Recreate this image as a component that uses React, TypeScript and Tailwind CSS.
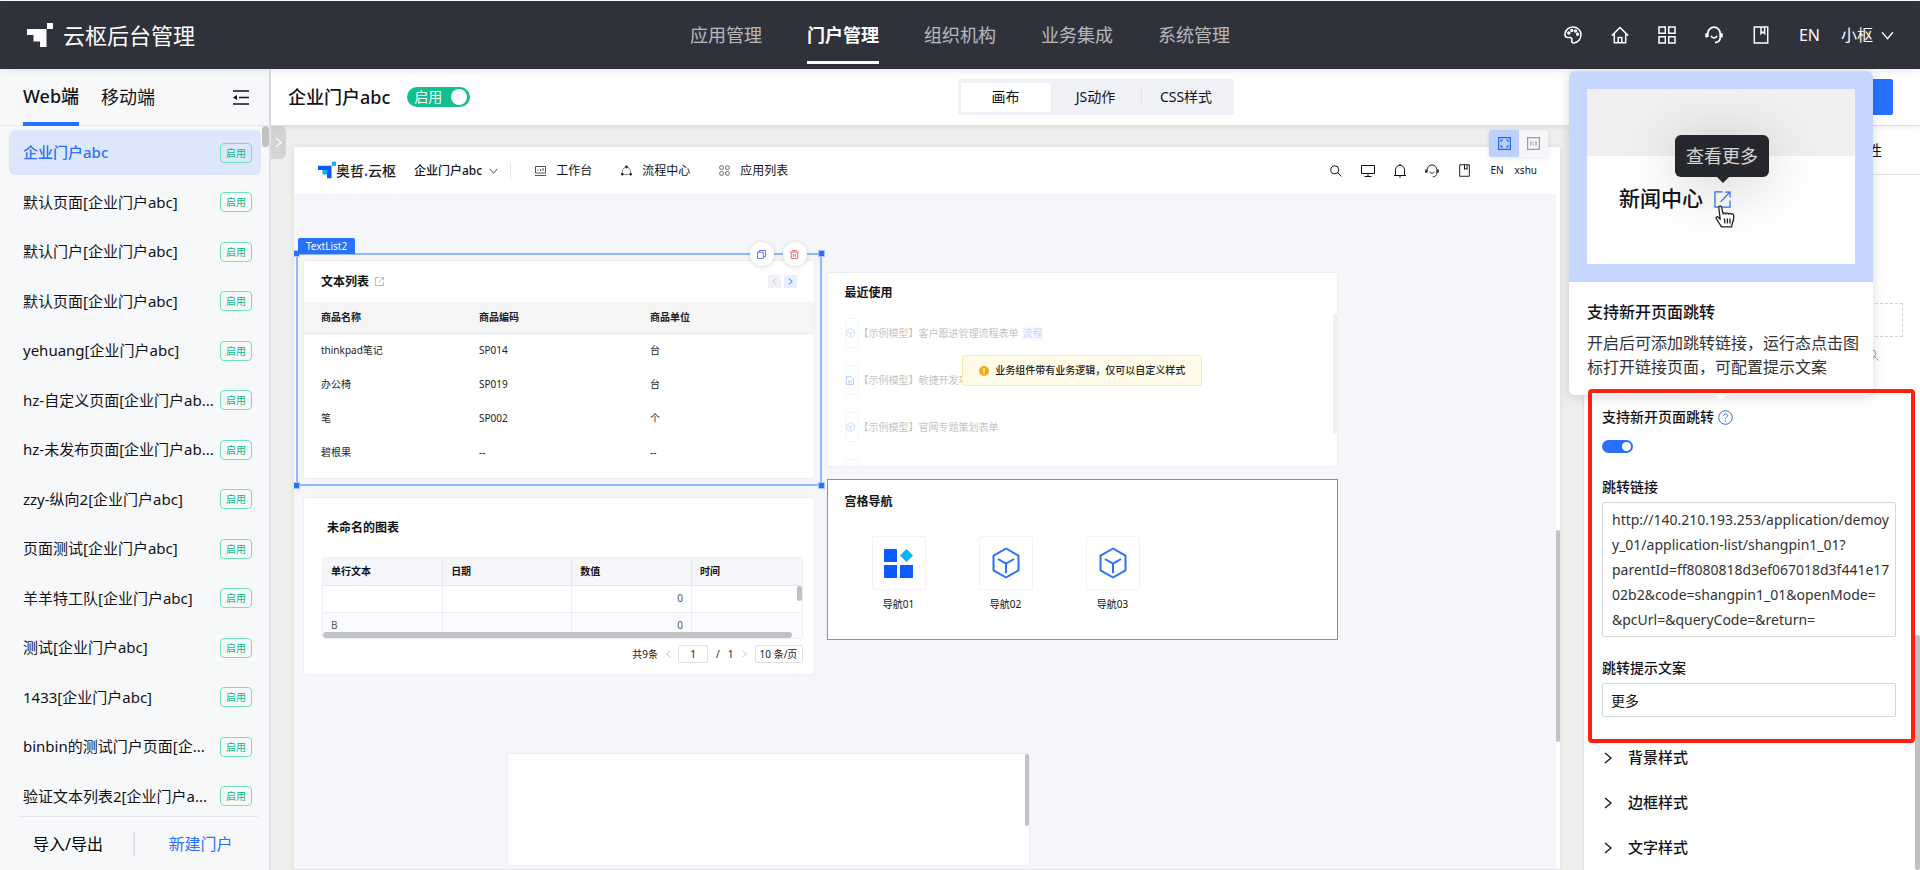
import React, { useState } from 'react';
import clsx from 'clsx';

const navItems = ['应用管理', '门户管理', '组织机构', '业务集成', '系统管理'];

const portals = [
  '企业门户abc',
  '默认页面[企业门户abc]',
  '默认门户[企业门户abc]',
  '默认页面[企业门户abc]',
  'yehuang[企业门户abc]',
  'hz-自定义页面[企业门户ab...',
  'hz-未发布页面[企业门户ab...',
  'zzy-纵向2[企业门户abc]',
  '页面测试[企业门户abc]',
  '羊羊特工队[企业门户abc]',
  '测试[企业门户abc]',
  '1433[企业门户abc]',
  'binbin的测试门户页面[企...',
  '验证文本列表2[企业门户a...',
];

const goods = [
  ['thinkpad笔记', 'SP014', '台'],
  ['办公椅', 'SP019', '台'],
  ['笔', 'SP002', '个'],
  ['碧根果', '--', '--'],
];

const recents = [
  { name: '【示例模型】客户跟进管理流程表单', tag: '流程', icon: 'cube' },
  { name: '【示例模型】敏捷开发项目管理表单', tag: '', icon: 'doc' },
  { name: '【示例模型】官网专题策划表单', tag: '', icon: 'cube' },
  { name: '', tag: '', icon: '' },
];

const jumpUrl = [
  'http://140.210.193.253/application/demoy',
  'y_01/application-list/shangpin1_01?',
  'parentId=ff8080818d3ef067018d3f441e17',
  '02b2&code=shangpin1_01&openMode=',
  '&pcUrl=&queryCode=&return=',
].join('\n');

type IconProps = { className?: string; children?: React.ReactNode; box?: string; width?: number };

function Svg({ className, children, box = '0 0 18 18', width = 1.5 }: IconProps) {
  return (
    <svg viewBox={box} className={clsx('shrink-0', className)} fill="none" stroke="currentColor" strokeWidth={width} aria-hidden="true">
      {children}
    </svg>
  );
}

const PaletteIcon = ({ className }: IconProps) => (
  <Svg className={className}>
    <path d="M1 7.6C1.6 3.9 4.9 1 9 1c4.500 0 8 3.400 8 7.800 0 4.500-3.300 8.200-7.300 8.200-1.500 0-2.200-1-1.900-2.200.4-1.500.1-2.900-1.300-3.300-1.200-.3-2.300.3-3.500-.1C1.500 11 .8 9.500 1 7.600z" />
    <circle cx="4.800" cy="7" r="1" />
    <circle cx="7.800" cy="4.600" r="1" />
    <circle cx="11.500" cy="5" r="1" />
    <circle cx="13.600" cy="8.300" r="1" />
  </Svg>
);

const HomeIcon = ({ className }: IconProps) => (
  <Svg className={className}>
    <path d="M.8 9.600 9 1.500l8.200 8.100M3.300 8v8.700h11.400V8M7.200 16.500v-5h3.600v5" />
  </Svg>
);

const GridIcon = ({ className }: IconProps) => (
  <Svg className={className}>
    <path d="M1 1h6.300v6.300H1zM10.700 1H17v6.300h-6.300zM1 10.700h6.300V17H1zM10.700 10.700H17V17h-6.300z" />
  </Svg>
);

const HeadsetIcon = ({ className, width }: IconProps) => (
  <Svg className={className} width={width}>
    <path d="M2.800 11V7.500C2.800 4 5.500 1.200 9 1.200S15.200 4 15.200 7.500v4.300c0 2.700-2 4.500-5.200 4.800" />
    <path d="M6 9.800c.6 1.500 1.600 2.200 3 2.200s2.400-.7 3-2.200" />
    <path d="M1.300 7.200v4.200M16.700 7.200v4.200" strokeWidth="2" />
  </Svg>
);

const BookIcon = ({ className, width }: IconProps) => (
  <Svg className={className} width={width}>
    <path d="M2.300 1h13.400v16H2.300zM9 1v6.500l1.800-1.600 1.800 1.600V1" />
  </Svg>
);

const ChevronDown = ({ className, width = 1.2 }: IconProps) => (
  <Svg className={className} box="0 0 12 8" width={width}>
    <path d="M1 1l5 6 5-6" />
  </Svg>
);

const ChevronRight = ({ className, width = 1.3 }: IconProps) => (
  <Svg className={className} box="0 0 8 12" width={width}>
    <path d="M1 1l6 5-6 5" />
  </Svg>
);

const ShareIcon = ({ className, width = 1.3 }: IconProps) => (
  <Svg className={className} width={width}>
    <path d="M9 1H1v16h16V10M7 11.500 16 2M12 1.300h5V6.500" />
  </Svg>
);

const CubeIcon = ({ className, width = 2 }: IconProps) => (
  <Svg className={className} box="0 0 28 32" width={width}>
    <path d="M14 1.500 26.500 8.700v14.600L14 30.500 1.500 23.300V8.700zM6 12l8 4.600L22 12M14 16.600V26" strokeLinejoin="round" />
  </Svg>
);

// the corner mark used by both logos
function LogoMark({ className, main, light, accent }: { className: string; main: string; light: string; accent: string }) {
  return (
    <svg viewBox="0 0 26 24" className={clsx('shrink-0', className)} aria-hidden="true">
      <path d="M0 6h19.500v18H13V12H0z" fill={main} />
      <path d="M6.500 12H13v6.500H6.500z" fill={light} />
      <path d="M20 0h6v6h-6z" fill={accent} />
    </svg>
  );
}

function Header() {
  return (
    <header className="relative z-10 mt-px grid h-[68px] shrink-0 grid-cols-[1fr_auto_1fr] items-center bg-[#2f323b] text-white shadow-[0_2px_8px_rgba(0,0,0,0.08)]">
      <a href="#" className="flex items-center gap-[10px] pl-[27px]">
        <LogoMark className="h-6 w-[26px]" main="#fff" light="#fff" accent="#fff" />
        <span className="text-[22px] leading-8">云枢后台管理</span>
      </a>
      <nav className="flex gap-[45px] text-lg">
        {navItems.map((item, i) => (
          <a
            key={item}
            href="#"
            className={clsx('flex h-[58px] items-center border-y-[3px] border-t-transparent', i === 1 ? 'border-b-white font-bold' : 'border-b-transparent text-white/65')}
          >
            {item}
          </a>
        ))}
      </nav>
      <div className="flex items-center justify-end gap-[29px] pr-[26px]">
        <button aria-label="主题"><PaletteIcon className="size-[18px]" /></button>
        <button aria-label="首页"><HomeIcon className="size-[18px]" /></button>
        <button aria-label="应用"><GridIcon className="size-[18px]" /></button>
        <button aria-label="客服"><HeadsetIcon className="size-[18px]" width={1.7} /></button>
        <button aria-label="文档"><BookIcon className="size-[18px]" /></button>
        <button className="text-base">EN</button>
        <button className="-ml-2 flex items-center gap-2 text-base">
          小枢
          <ChevronDown className="h-[9px] w-[13px]" />
        </button>
      </div>
    </header>
  );
}

function Sidebar() {
  const [active, setActive] = useState(0);
  return (
    <aside className="flex w-[271px] shrink-0 flex-col border-r-2 border-[#dfe1e4] bg-[#f7f8fa]">
      <div className="flex h-[57px] shrink-0 items-stretch border-b border-[#e6e8eb] pl-[23px] pr-5 text-lg text-[#111218]">
        <button className="-mb-px border-b-4 border-[#2970ff] font-medium">Web端</button>
        <button className="ml-[22px]">移动端</button>
        <button aria-label="收起菜单" className="ml-auto">
          <Svg className="h-[15px] w-4" box="0 0 16 15" width={1.5}>
            <path d="M0 1h16M6 7.500h10M0 14h16" />
            <path d="M0 7.500l4-2.500v5z" fill="currentColor" stroke="none" />
          </Svg>
        </button>
      </div>
      <div className="relative min-h-0 flex-1 overflow-hidden">
        <ul className="pt-[2px]">
          {portals.map((name, i) => (
            <li key={i} className="flex items-center pl-[9px] pr-2 odd:h-[49px] even:h-[50px]">
              <button
                onClick={() => setActive(i)}
                className={clsx(
                  'flex h-[45px] w-full min-w-0 items-center justify-between rounded-md pl-[14px] pr-[9px]',
                  i === active ? 'bg-[#dce7fb] font-medium text-[#2970ff]' : 'text-[#111218]'
                )}
              >
                <span className="text-[15px] whitespace-nowrap">{name}</span>
                <span className="h-5 w-8 shrink-0 rounded-[4px] border border-[#71e2bd] text-center text-[10px] leading-[18px] font-normal text-[#10b88a]">启用</span>
              </button>
            </li>
          ))}
        </ul>
        <span className="absolute right-0 top-0 h-[21px] w-[7px] rounded-full bg-[#c1c1c1]" />
      </div>
      <div className="ml-[18px] mr-[11px] grid h-[54px] shrink-0 grid-cols-[117px_1fr] items-center border-t border-[#e3e5e8] text-center text-base">
        <button className="h-6 border-r-2 border-[#dfe1e4] pr-[15px]">导入/导出</button>
        <button className="pl-2 text-[#2970ff]">新建门户</button>
      </div>
    </aside>
  );
}

function Toolbar() {
  return (
    <div className="relative z-[5] grid h-[57px] shrink-0 grid-cols-[1fr_auto_1fr] items-center border-b border-[#dfe1e4] bg-white shadow-[0_1px_6px_rgba(0,0,0,0.08)]">
      <div className="flex items-center gap-[17px] pl-[17px]">
        <h1 className="text-lg font-medium text-[#111218]">企业门户abc</h1>
        <label className="flex h-5 w-[63px] items-center justify-between rounded-full bg-[#10c08f] pl-[7px] pr-[3px] text-sm leading-5 text-white">
          启用
          <input type="checkbox" defaultChecked className="size-4 appearance-none rounded-full bg-white" />
        </label>
      </div>
      <div className="flex h-9 items-center rounded-[3px] bg-[#f0f1f6] px-[3px] text-sm text-[#111218]">
        <button className="h-[29px] w-[90px] rounded-[2px] bg-white">画布</button>
        <button className="w-[90px]">JS动作</button>
        <button className="w-[90px] border-l border-[#dfe1e4] leading-[14px]">CSS样式</button>
      </div>
      <button aria-label="保存" className="mr-[27px] h-9 w-[90px] justify-self-end rounded-[2px] bg-[#2970ff]" />
    </div>
  );
}

function CanvasHeader() {
  return (
    <div className="flex h-[47px] shrink-0 items-center bg-white pl-6 pr-[23px] text-xs text-[#111218]">
      <div className="flex items-center">
        <LogoMark className="h-[18px] w-[18px] self-start" main="#0a5cff" light="#00b4ff" accent="#00b4ff" />
        <span className="text-sm font-medium leading-5 text-[#222]">奥哲<span className="font-bold text-[#0a5cff]">.</span>云枢</span>
      </div>
      <button className="ml-[18px] flex items-center gap-[7px] font-medium">
        企业门户abc
        <ChevronDown className="h-[6px] w-[9px]" width={1} />
      </button>
      <span className="ml-3 h-[18px] w-px bg-[#e8e8e8]" />
      <a href="#" className="ml-6 flex items-center gap-[10px]">
        <Svg className="h-[10px] w-[11px] text-[#555]" box="0 0 11 10" width={1}>
          <path d="M.5.5h10v6.500H.5zM0 9.500h11M3 5V4M5.500 5V3M8 5V2" />
        </Svg>
        工作台
      </a>
      <a href="#" className="ml-[29px] flex items-center gap-[10px]">
        <Svg className="size-[11px]" box="0 0 12 12" width={1}>
          <path d="M4.500 2.500C2.500 3.500 1.500 5.500 1.500 8M7.500 2.500c2 1 3 3 3 5.500M3.500 10.500h5" stroke="#777" />
          <path d="M6 .5v3M4.500 2h3M0 10h3M1.500 8.500v3M9 10h3M10.500 8.500v3" strokeWidth="1.500" />
        </Svg>
        流程中心
      </a>
      <a href="#" className="ml-[29px] flex items-center gap-[10px]">
        <Svg className="size-[11px] text-[#666]" box="0 0 12 12" width={1}>
          <rect x=".8" y=".8" width="4" height="4" rx="1.500" />
          <rect x="7.200" y=".8" width="4" height="4" rx="1.500" />
          <rect x=".8" y="7.200" width="4" height="4" rx="1.500" />
          <rect x="7.200" y="7.200" width="4" height="4" rx="1.500" />
        </Svg>
        应用列表
      </a>
      <div className="ml-auto flex items-center gap-[19px] text-[10px]">
        <button aria-label="搜索">
          <Svg className="size-3" box="0 0 12 12" width={1}><circle cx="4.800" cy="4.800" r="4" /><path d="M7.800 7.800 11.500 11.500" /></Svg>
        </button>
        <button aria-label="桌面">
          <Svg className="h-3 w-[14px]" box="0 0 14 12" width={1}><path d="M.5.500h13v8H.5zM7 8.500v3M3.500 11.500h7" /></Svg>
        </button>
        <button aria-label="消息">
          <Svg className="h-[14px] w-3" box="0 0 12 14" width={1}><path d="M0 11.500h12M1.500 11.500V5.800C1.500 3 3.500 1.300 6 1.300S10.500 3 10.500 5.800v5.700M6 0v1.300M6 12v2" /></Svg>
        </button>
        <button aria-label="客服"><HeadsetIcon className="size-[14px]" width={1.2} /></button>
        <button aria-label="文档"><BookIcon className="size-[13px]" width={1.3} /></button>
        <button>EN</button>
        <button className="-ml-2">xshu</button>
      </div>
    </div>
  );
}

const cardClass = 'rounded-[3px] border border-[#eceef3] bg-white';

function TextListCard() {
  return (
    <div className="relative">
      <section className={clsx(cardClass, 'h-[219px]')}>
        <div className="flex h-[41px] items-center pl-[17px] pr-[17px]">
          <h2 className="text-xs font-semibold">文本列表</h2>
          <ShareIcon className="ml-[6px] size-[9px] text-[#aaa]" width={1.6} />
          <button aria-label="上一页" className="ml-auto flex size-[13px] items-center justify-center bg-[#f1f2f5] text-[#bbb]">
            <ChevronRight className="h-[7px] w-[5px] rotate-180" />
          </button>
          <button aria-label="下一页" className="ml-[3px] flex size-[13px] items-center justify-center bg-[#e8f0ff] text-[#2970ff]">
            <ChevronRight className="h-[7px] w-[5px]" width={1.6} />
          </button>
        </div>
        <table className="w-full table-fixed text-left text-[10px] text-[#222]">
          <thead>
            <tr className="h-[31px] border-b border-[#ebebeb] bg-[#f5f5f5]">
              <th className="w-[157px] pl-[17px] font-semibold">商品名称</th>
              <th className="w-[171px] pl-[18px] font-semibold">商品编码</th>
              <th className="pl-[18px] font-semibold">商品单位</th>
            </tr>
          </thead>
          <tbody>
            {goods.map((row) => (
              <tr key={row[0]} className="h-[34px]">
                <td className="pl-[17px]">{row[0]}</td>
                <td className="pl-[18px]">{row[1]}</td>
                <td className="pl-[18px]">{row[2]}</td>
              </tr>
            ))}
          </tbody>
        </table>
      </section>

      {/* selection frame */}
      <div className="pointer-events-none absolute -inset-x-[7px] -inset-y-[7px] border-2 border-[#93b7ff]">
        <span className="absolute -left-[4px] -top-[4px] size-[5px] bg-[#2970ff] ring-1 ring-[#a9c6ff]" />
        <span className="absolute -right-[4px] -top-[4px] size-[5px] bg-[#2970ff] ring-1 ring-[#a9c6ff]" />
        <span className="absolute -bottom-[4px] -left-[4px] size-[5px] bg-[#2970ff] ring-1 ring-[#a9c6ff]" />
        <span className="absolute -bottom-[4px] -right-[4px] size-[5px] bg-[#2970ff] ring-1 ring-[#a9c6ff]" />
        <span className="absolute -top-[17px] left-0 h-4 rounded-t-[2px] bg-[#2970ff] px-2 text-[10px] leading-4 text-white">TextList2</span>
      </div>
      <div className="absolute -top-[18px] right-[8px] flex gap-[9px]">
        <button aria-label="复制" className="flex size-6 items-center justify-center rounded-full bg-white text-[#5b6cff] shadow-[0_1px_5px_rgba(0,0,0,0.15)]">
          <Svg className="size-[9px]" box="0 0 10 10" width={1.1}><path d="M.5 2.500h6.500v7H.5zM2.500 2.500V.5h7v7H7" /></Svg>
        </button>
        <button aria-label="删除" className="flex size-6 items-center justify-center rounded-full bg-white text-[#f56565] shadow-[0_1px_5px_rgba(0,0,0,0.15)]">
          <Svg className="size-[9px]" box="0 0 10 10" width={1.1}><path d="M0 2.200h10M3 2V.5h4V2M1.500 2.500v7h7v-7M4 4.500v3M6 4.500v3" /></Svg>
        </button>
      </div>
    </div>
  );
}

function ChartCard() {
  return (
    <section className={clsx(cardClass, 'mt-[18px] h-[178px] pl-[18px] pr-[11px]')}>
      <h2 className="flex h-[59px] items-center pl-[5px] text-xs font-semibold">未命名的图表</h2>
      <div className="relative h-[82px] overflow-hidden rounded-[3px] border border-[#eceef3]">
        <table className="w-full table-fixed text-left text-[10px]">
          <thead>
            <tr className="h-[27px] bg-[#f4f6fa]">
              <th className="w-[25%] border-r border-b border-[#e6e8ec] pl-2 font-semibold">单行文本</th>
              <th className="w-[27%] border-r border-b border-[#e6e8ec] pl-2 font-semibold">日期</th>
              <th className="w-[25%] border-r border-b border-[#e6e8ec] pl-2 font-semibold">数值</th>
              <th className="border-b border-[#e6e8ec] pl-2 font-semibold">时间</th>
            </tr>
          </thead>
          <tbody className="text-[#555]">
            {['', 'B'].map((text, i) => (
              <tr key={i} className="h-[27px] even:bg-[#fafbff]">
                <td className="border-r border-b border-[#eceef3] pl-2">{text}</td>
                <td className="border-r border-b border-[#eceef3]" />
                <td className="border-r border-b border-[#eceef3] pr-2 text-right">0</td>
                <td className="border-b border-[#eceef3]" />
              </tr>
            ))}
          </tbody>
        </table>
        <span className="absolute right-0 top-[28px] h-[15px] w-[5px] rounded-full bg-[#c1c1c1]" />
        <span className="absolute bottom-0 left-0 h-[6px] w-[98%] rounded-full bg-[#c1c2c4]" />
      </div>
      <div className="mt-[6px] flex items-center justify-end text-[10px] text-[#222]">
        <span>共9条</span>
        <button aria-label="上一页" className="ml-2 text-[#bbb]"><ChevronRight className="h-2 w-[5px] rotate-180" /></button>
        <input aria-label="页码" defaultValue="1" className="ml-[7px] h-[18px] w-[30px] rounded-[2px] border border-[#dfe1e6] text-center" />
        <span className="ml-2">/</span>
        <span className="ml-2">1</span>
        <button aria-label="下一页" className="ml-2 text-[#bbb]"><ChevronRight className="h-2 w-[5px]" /></button>
        <select aria-label="每页条数" className="ml-2 h-[18px] w-12 appearance-none rounded-[2px] border border-[#dfe1e6] text-center">
          <option>10 条/页</option>
        </select>
      </div>
    </section>
  );
}

function RecentCard() {
  return (
    <section className={clsx(cardClass, 'relative h-[195px] overflow-hidden')}>
      <h2 className="flex h-10 items-center pl-[17px] text-xs font-semibold">最近使用</h2>
      <ul className="mt-[5px] flex flex-col gap-[17px] pl-[17px] text-[10px] opacity-30">
        {recents.map((item, i) => (
          <li key={i} className="flex items-center">
            <span className="flex h-[30px] w-[14px] items-center border border-[#dde0e6] text-[#2970ff]">
              {item.icon === 'cube' && <CubeIcon className="h-[10px] w-[9px]" width={2.5} />}
              {item.icon === 'doc' && (
                <Svg className="h-[9px] w-[8px]" box="0 0 8 9" width={1}><path d="M.5.500h4.500l2.500 2.500v5.500h-7zM2 5h4M2 6.800h4" /></Svg>
              )}
            </span>
            <span className="text-[#333]">{item.name}</span>
            {item.tag && <span className="ml-1 bg-[#edf3ff] text-[#2970ff]">{item.tag}</span>}
          </li>
        ))}
      </ul>
      <div className="absolute inset-x-0 top-[82px] flex justify-center">
        <p className="flex h-[31px] items-center gap-[6px] rounded-[3px] border border-[#ffe9a6] bg-[#fffbe8] px-4 text-[10px] font-medium text-[#222]">
          <span className="flex size-[10px] items-center justify-center rounded-full bg-[#faa61a] text-[8px] font-bold leading-none text-white">!</span>
          业务组件带有业务逻辑，仅可以自定义样式
        </p>
      </div>
      <span className="absolute right-0 top-[41px] h-[120px] w-1 rounded-full bg-[#f0f0f2]" />
    </section>
  );
}

function GridNavCard() {
  return (
    <section className="mt-3 h-[161px] border border-[#f5694f] bg-white">
      <h2 className="flex h-[43px] items-center pl-[17px] text-xs font-semibold">宫格导航</h2>
      <div className="mt-[13px] flex gap-[53px] pl-11 text-[10px]">
        {['导航01', '导航02', '导航03'].map((name, i) => (
          <a key={name} href="#" className="flex flex-col items-center gap-[6px]">
            <span className="flex h-[54px] w-[54px] items-center justify-center rounded-[2px] border border-[#f2f3f5]">
              {i === 0 ? (
                <svg viewBox="0 0 29 29" className="size-[29px]" aria-hidden="true">
                  <path d="M1 0h11a1 1 0 011 1v12H0V1a1 1 0 011-1zM0 16h13v13H1a1 1 0 01-1-1zM16 16h13v12a1 1 0 01-1 1H16z" fill="#0a5cff" />
                  <path d="M22.500 0 29 6.500 22.500 13 16 6.500z" fill="#00b4ff" />
                </svg>
              ) : (
                <CubeIcon className="h-8 w-7 text-[#2970ff]" />
              )}
            </span>
            <span className="leading-4">{name}</span>
          </a>
        ))}
      </div>
    </section>
  );
}

function Designer() {
  return (
    <main className="relative min-w-0 flex-1 bg-[#eeeeec] pl-[23px] pr-[22px] pt-[21px]">
      <button aria-label="展开面板" className="absolute left-0 top-0 flex h-[33px] w-[15px] items-center justify-center rounded-r-md bg-[#d4d4d4] text-white">
        <ChevronRight className="h-[11px] w-[7px]" />
      </button>
      <div className="flex h-full flex-col bg-white shadow-[0_0_6px_rgba(0,0,0,0.08)]">
        <CanvasHeader />
        <div className="relative flex min-h-0 flex-1 border-b border-[#e2e4e8]">
          <div className="min-w-0 flex-1 overflow-hidden bg-[#f5f6f9]">
            <div className="flex gap-3 pl-[9px] pr-[218px] text-[#111218]">
              <div className="min-w-0 flex-1 pt-[66px]">
                <TextListCard />
                <ChartCard />
              </div>
              <div className="min-w-0 flex-1 pt-[78px]">
                <RecentCard />
                <GridNavCard />
              </div>
            </div>
            <div className={clsx(cardClass, 'relative ml-[213px] mt-[78px] h-[113px] w-[523px]')}>
              <span className="absolute right-0 top-0 h-[72px] w-1 rounded-full bg-[#c1c1c1]" />
            </div>
          </div>
          <div className="w-1 bg-white pt-[336px]">
            <div className="h-[212px] w-1 rounded-full bg-[#c1c2c4]" />
          </div>
        </div>
      </div>
      {/* view mode switch */}
      <div className="absolute right-[34px] top-1 flex h-[27px] overflow-hidden rounded-[2px] bg-[#f5f6f9] shadow-[0_1px_5px_rgba(0,0,0,0.1)]">
        <button aria-label="自适应" className="flex w-[30px] items-center justify-center bg-[#bcd1ff] text-[#1a6cff]">
          <Svg className="size-[13px]" box="0 0 13 13" width={1.2}><path d="M.6.600h11.800v11.800H.600zM3 5V3h2M8 3h2v2M10 8v2H8M5 10H3V8" /></Svg>
        </button>
        <button aria-label="原始尺寸" className="flex w-[29px] items-center justify-center text-[#9a9ca3]">
          <Svg className="size-[13px]" box="0 0 13 13" width={1.2}><path d="M.6.600h11.800v11.800H.600zM4 4.500v4M6.500 5v1M6.500 7.200v1M9 4.500v4" /></Svg>
        </button>
      </div>
    </main>
  );
}

function HelpPopover() {
  return (
    <div className="absolute right-[47px] top-[71px] z-20 w-[304px] rounded-md bg-white shadow-[0_2px_12px_rgba(0,0,0,0.15)]">
      <div className="rounded-t-md bg-[#c6d6ff] p-[18px]">
        <div className="relative h-[175px] bg-[#f0f0f0] pt-[67px]">
          <div className="flex h-[108px] items-center gap-[11px] rounded-tl bg-white pl-[32px] pb-[22px] text-[#111218]">
            <span className="text-[21px] font-medium">新闻中心</span>
            <ShareIcon className="size-[17px] text-[#2970ff]" />
          </div>
          <div className="absolute left-[88px] top-[46px] flex h-[42px] w-[94px] items-center justify-center rounded-md bg-[#25272d] text-lg text-white/80 shadow-[0_8px_60px_rgba(0,0,0,0.2)]">
            查看更多
            <span className="absolute left-[42px] top-full h-[6px] w-3 bg-[#25272d] [clip-path:polygon(0_0,100%_0,50%_100%)]" />
          </div>
          <svg viewBox="0 0 20 23" className="absolute left-[128px] top-[116px] h-[23px] w-5" fill="#fff" stroke="#222" strokeWidth="1.300" strokeLinejoin="round" aria-hidden="true">
            <path d="M6.500 21.800 1.200 13.500c-.6-1.200.9-2.400 2-1.300l2 2L3.800 2.600C3.600.8 6 .4 6.500 2.200l1.700 7c.2-1.700 2.500-1.600 2.700-.1.300-1.300 2.400-1.300 2.700.1.300-1.200 2.200-1.100 2.600.2.400-.9 2.200-.7 2.400.6.3 2.600.3 5.300-1.200 8l-.8 3.800z" />
            <path d="M9.500 13.500l.4 5M12.300 13.500l.2 5M15 13.500v5" />
          </svg>
        </div>
      </div>
      <div className="px-[18px] pb-4 pt-[18px] text-base leading-6 text-[#111218]">
        <h3 className="mb-[7px] font-medium">支持新开页面跳转</h3>
        <p className="-mr-[6px] text-[#333]">
          开启后可添加跳转链接，运行态点击图
          <br />
          标打开链接页面，可配置提示文案
        </p>
      </div>
      <span className="absolute left-[146px] top-full h-[5px] w-3 bg-white [clip-path:polygon(0_0,100%_0,50%_100%)]" />
    </div>
  );
}

function PropertyPanel() {
  return (
    <aside className="relative w-[338px] shrink-0 overflow-hidden border-l-2 border-[#e3e4e8] bg-white text-[#111218]">
      <div className="flex h-[49px] items-center justify-end border-b border-[#dfe1e4] pr-[38px] text-[15px]">
        <button>属性</button>
      </div>
      <div className="mt-[128px] ml-[18px] mr-[17px] h-[34px] border border-dashed border-[#d0d2d6]" />
      <Svg className="mr-[41px] ml-auto mt-3 size-3 text-[#999]" box="0 0 12 12" width={1}>
        <circle cx="4.800" cy="4.800" r="4" />
        <path d="M7.800 7.800 11.500 11.500" />
      </Svg>
      <div className="mt-8 ml-2 mr-[9px] pl-[10px] pr-[15px] pt-3 pb-[26px]">
        <div className="flex h-6 items-center gap-1">
          <label htmlFor="open-new" className="text-sm leading-6 font-medium">支持新开页面跳转</label>
          <Svg className="size-[15px] text-[#2970ff]" box="0 0 15 15" width={1}>
            <circle cx="7.500" cy="7.500" r="6.800" />
            <path d="M5.500 6c0-1.200.8-2 2-2s2 .7 2 1.800c0 1.500-2 1.500-2 3.200M7.500 10.300v1.200" />
          </Svg>
        </div>
        <div className="mt-[11px] flex h-[13px] w-[31px] items-center justify-end rounded-full bg-[#2970ff] pr-[2px]">
          <input id="open-new" type="checkbox" defaultChecked className="size-[9px] appearance-none rounded-full bg-white" />
        </div>
        <label htmlFor="jump-url" className="mt-[22px] block text-sm leading-6 font-medium">跳转链接</label>
        <textarea
          id="jump-url"
          defaultValue={jumpUrl}
          className="mt-[3px] block h-[135px] w-full resize-none overflow-hidden rounded-[2px] border border-[#d5d7db] py-1 pl-[9px] text-sm leading-[25px] whitespace-pre text-[#333]"
        />
        <label htmlFor="jump-tip" className="mt-[19px] block text-sm leading-6 font-medium">跳转提示文案</label>
        <input id="jump-tip" defaultValue="更多" className="mt-[3px] block h-[34px] w-full rounded-[2px] border border-[#d5d7db] px-2 text-sm" />
      </div>
      <div className="-mt-2">
        {['背景样式', '边框样式', '文字样式'].map((name) => (
          <button key={name} className="flex h-[45px] w-full items-center gap-4 pl-5 text-[15px] font-medium">
            <ChevronRight className="h-[12px] w-2" />
            {name}
          </button>
        ))}
      </div>
      <span className="absolute bottom-0 right-0 h-[235px] w-[5px] rounded-full bg-[#c1c1c1]" />
    </aside>
  );
}

export default function App() {
  return (
    <div className="relative flex h-screen flex-col overflow-hidden bg-white font-['Noto_Sans','Noto_Sans_CJK_SC',sans-serif]">
      <Header />
      <div className="flex min-h-0 flex-1">
        <Sidebar />
        <div className="flex min-w-0 flex-1 flex-col">
          <Toolbar />
          <div className="flex min-h-0 flex-1">
            <Designer />
            <PropertyPanel />
          </div>
        </div>
      </div>
      <HelpPopover />
      {/* highlight around the jump settings */}
      <div className="pointer-events-none absolute right-[5px] top-[389px] z-30 h-[354px] w-[327px] rounded-[4px] border-4 border-[#ff2010]" />
    </div>
  );
}
